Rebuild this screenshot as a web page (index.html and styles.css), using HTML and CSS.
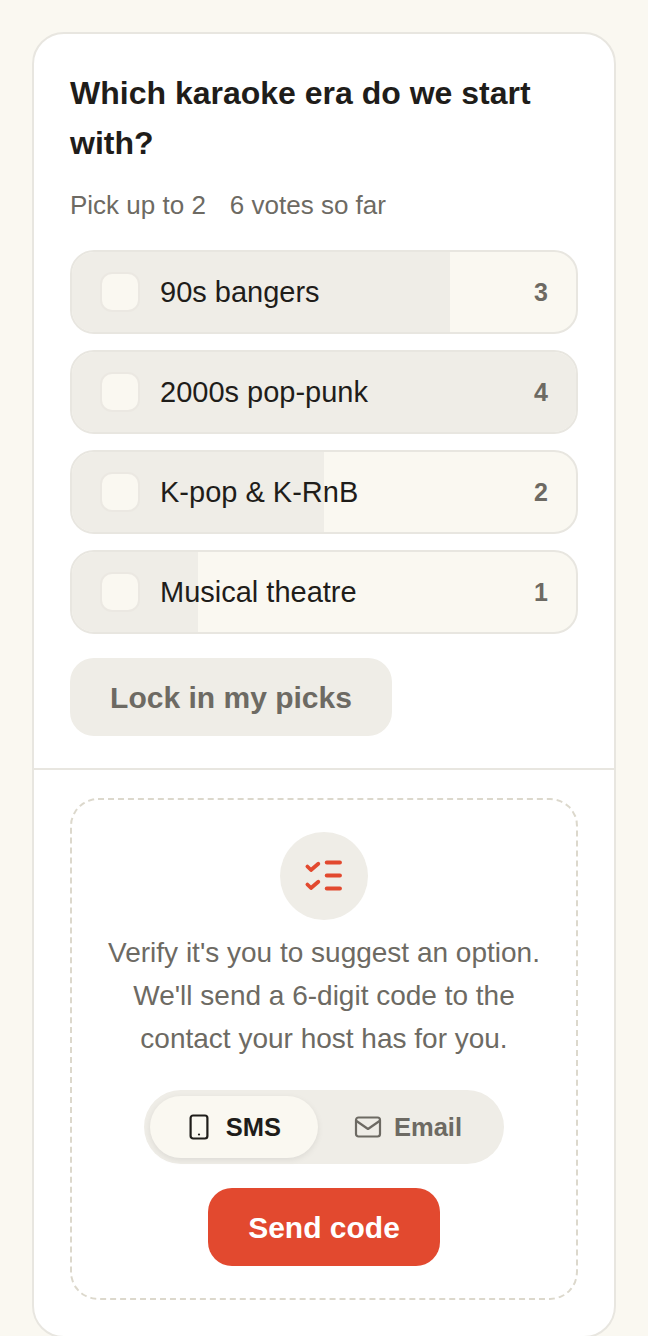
FILE: index.html
```html
<!DOCTYPE html>
<html lang="en">
<head>
<meta charset="UTF-8">
<meta name="viewport" content="width=device-width, initial-scale=1.0">
<title>Karaoke poll</title>
<link rel="stylesheet" href="styles.css">
</head>
<body>
    <div class="card">
        <div class="poll">
            <h2 class="poll-title">Which karaoke era do we start with?</h2>
            <p class="poll-meta"><span>Pick up to 2</span><span>6 votes so far</span></p>

            <div class="options">
                <div class="option">
                    <div class="option-fill" style="width: 75%"></div>
                    <span class="option-check"></span>
                    <span class="option-label">90s bangers</span>
                    <span class="option-count">3</span>
                </div>
                <div class="option">
                    <div class="option-fill" style="width: 100%"></div>
                    <span class="option-check"></span>
                    <span class="option-label">2000s pop-punk</span>
                    <span class="option-count">4</span>
                </div>
                <div class="option">
                    <div class="option-fill" style="width: 50%"></div>
                    <span class="option-check"></span>
                    <span class="option-label">K-pop &amp; K-RnB</span>
                    <span class="option-count">2</span>
                </div>
                <div class="option">
                    <div class="option-fill" style="width: 25%"></div>
                    <span class="option-check"></span>
                    <span class="option-label">Musical theatre</span>
                    <span class="option-count">1</span>
                </div>
            </div>

            <button class="lock-button">Lock in my picks</button>
        </div>

        <div class="verify">
            <div class="verify-box">
                <div class="verify-icon">
                    <svg width="40" height="40" viewBox="0 0 40 40" fill="none" stroke="#e2492f" stroke-width="3.8" stroke-linecap="round" stroke-linejoin="round">
                        <path d="M3.400 10.500L7 14l7.300-6.300"/>
                        <path d="M3.400 28.500L7 32l7.300-6.300"/>
                        <path d="M22.700 6.500H36"/>
                        <path d="M22.700 19.500H36"/>
                        <path d="M22.700 32.500H36"/>
                    </svg>
                </div>
                <p class="verify-text">Verify it's you to suggest an option. We'll send a 6-digit code to the contact your host has for you.</p>

                <div class="toggle">
                    <div class="toggle-item active">
                        <svg width="24" height="28" viewBox="0 0 24 28" fill="none" stroke="#1f1d1a" stroke-width="2.200">
                            <rect x="3.600" y="2.500" width="16.800" height="23" rx="2.500"/>
                            <circle cx="12" cy="21.500" r="1.100" fill="#1f1d1a" stroke="none"/>
                        </svg>
                        <span>SMS</span>
                    </div>
                    <div class="toggle-item">
                        <svg width="28" height="24" viewBox="0 0 28 24" fill="none" stroke="#6d6a63" stroke-width="2.200" stroke-linejoin="round" stroke-linecap="round">
                            <rect x="2" y="2.500" width="24" height="19" rx="2.500"/>
                            <path d="M2.500 6l11.500 8 11.500-8"/>
                        </svg>
                        <span>Email</span>
                    </div>
                </div>

                <button class="send-button">Send code</button>
            </div>
        </div>
    </div>
</body>
</html>
```

FILE: styles.css
```css
html, body {
    height: 1336px;
    overflow: hidden;
}

body {
    margin: 0;
    padding: 32px 32px 0;
    background-color: #faf8f1;
    font-family: "Liberation Sans", Arial, sans-serif;
    color: #1f1d1a;
}

.card {
    background-color: #fff;
    border: 2px solid #e8e6e0;
    border-radius: 32px;
}

.poll {
    padding: 34px 36px 32px;
    border-bottom: 2px solid #e8e6e0;
}

.poll-title {
    margin: 0;
    font-size: 32px;
    line-height: 50px;
    font-weight: 700;
}

.poll-meta {
    display: flex;
    gap: 24px;
    margin: 12px 0 0;
    font-size: 26px;
    line-height: 50px;
    color: #6d6a63;
}

.options {
    display: flex;
    flex-direction: column;
    gap: 16px;
    margin-top: 20px;
}

.option {
    position: relative;
    display: flex;
    align-items: center;
    height: 84px;
    box-sizing: border-box;
    padding: 0 28px;
    background-color: #faf8f1;
    border: 2px solid #e8e6e0;
    border-radius: 24px;
    overflow: hidden;
}

.option-fill {
    position: absolute;
    top: 0;
    bottom: 0;
    left: 0;
    background-color: #efede7;
}

.option-check {
    position: relative;
    width: 40px;
    height: 40px;
    box-sizing: border-box;
    background-color: #faf8f1;
    border: 2px solid #ebe8e2;
    border-radius: 12px;
}

.option-label {
    position: relative;
    flex: 1;
    margin-left: 20px;
    font-size: 29px;
}

.option-count {
    position: relative;
    font-size: 25px;
    font-weight: 700;
    color: #6d6a63;
}

.lock-button {
    display: block;
    width: 322px;
    height: 78px;
    margin-top: 24px;
    padding: 2px 0 0;
    border: none;
    border-radius: 24px;
    background-color: #efede7;
    font-family: inherit;
    font-size: 30px;
    font-weight: 700;
    color: #6d6a63;
}

.verify {
    padding: 28px 36px 36px;
}

.verify-box {
    display: flex;
    flex-direction: column;
    align-items: center;
    height: 502px;
    box-sizing: border-box;
    padding: 32px 32px 0;
    border: 2px dashed #dcd8cc;
    border-radius: 28px;
}

.verify-icon {
    display: flex;
    align-items: center;
    justify-content: center;
    width: 88px;
    height: 88px;
    border-radius: 50%;
    background-color: #efede7;
}

.verify-text {
    margin: 11px -8px 0;
    font-size: 28px;
    line-height: 43px;
    text-align: center;
    color: #6d6a63;
}

.toggle {
    display: flex;
    width: 360px;
    height: 74px;
    box-sizing: border-box;
    margin-top: 30px;
    padding: 6px;
    border-radius: 37px;
    background-color: #efede7;
}

.toggle-item {
    display: flex;
    align-items: center;
    justify-content: center;
    gap: 12px;
    flex: 1;
    border-radius: 31px;
    font-size: 25.5px;
    font-weight: 700;
    color: #6d6a63;
}

.toggle-item.active {
    flex: none;
    width: 168px;
    gap: 15px;
    background-color: #faf8f1;
    box-shadow: 0 2px 6px rgba(0, 0, 0, 0.08);
    color: #1f1d1a;
}

.send-button {
    width: 232px;
    height: 78px;
    margin-top: 24px;
    padding: 2px 0 0;
    border: none;
    border-radius: 24px;
    background-color: #e2492f;
    font-family: inherit;
    font-size: 30px;
    font-weight: 700;
    color: #fff;
}
```
